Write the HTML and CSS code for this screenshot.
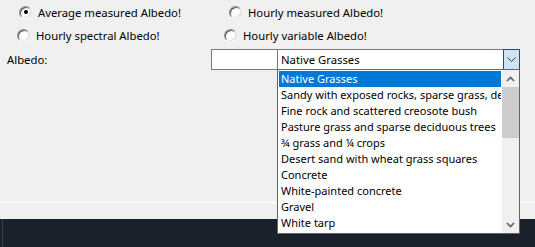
FILE: index.html
```html
<!DOCTYPE html>
<html lang="en">
<head>
    <meta charset="UTF-8">
    <title>Albedo</title>
    <link rel="stylesheet" href="styles.css">
</head>
<body>
    <div class="form">
        <div class="options">
            <div class="opt-row row-one">
                <label class="opt"><span class="radio checked"></span>Average measured Albedo!</label>
                <label class="opt"><span class="radio"></span>Hourly measured Albedo!</label>
            </div>
            <div class="opt-row row-two">
                <label class="opt"><span class="radio"></span>Hourly spectral Albedo!</label>
                <label class="opt"><span class="radio"></span>Hourly variable Albedo!</label>
            </div>
        </div>

        <div class="field-row">
            <span class="field-label">Albedo:</span>
            <div class="textbox"></div>
            <div class="combo">
                <span class="combo-value">Native Grasses</span>
                <span class="combo-button">
                    <svg width="9" height="5" viewBox="0 0 9 5"><polyline points="0.5,0.5 4.5,4.5 8.5,0.5" fill="none" stroke="#3c3c3c" stroke-width="1"/></svg>
                </span>
            </div>
        </div>

        <div class="dropdown">
            <ul class="items">
                <li class="selected">Native Grasses</li>
                <li>Sandy with exposed rocks, sparse grass, desert shrubs</li>
                <li>Fine rock and scattered creosote bush</li>
                <li>Pasture grass and sparse deciduous trees</li>
                <li>¾ grass and ¼ crops</li>
                <li>Desert sand with wheat grass squares</li>
                <li>Concrete</li>
                <li>White-painted concrete</li>
                <li>Gravel</li>
                <li>White tarp</li>
            </ul>
            <div class="scrollbar">
                <span class="scroll-arrow">
                    <svg width="9" height="6" viewBox="0 0 9 6"><polyline points="1,5 4.5,1.5 8,5" fill="none" stroke="#606060" stroke-width="1.6"/></svg>
                </span>
                <span class="scroll-thumb"></span>
                <span class="scroll-track"></span>
                <span class="scroll-arrow">
                    <svg width="9" height="6" viewBox="0 0 9 6"><polyline points="1,1 4.5,4.5 8,1" fill="none" stroke="#606060" stroke-width="1.6"/></svg>
                </span>
            </div>
        </div>
    </div>
    <div class="strip"></div>
    <div class="taskbar"><div class="taskbar-edge"></div></div>
</body>
</html>
```
FILE: styles.css
```css
body {
    margin: 0;
    width: 535px;
    height: 247px;
    overflow: hidden;
    background-color: #f0f0f0;
    font-family: "Noto Sans", "Open Sans", sans-serif;
    font-size: 11.3px;
    color: #000;
}
.form {
    position: relative;
    height: 202px;
    border-bottom: 1px solid #fff;
}
.options {
    display: flex;
    flex-direction: column;
    gap: 7px;
    padding-top: 4px;
}
.opt-row {
    display: flex;
    align-items: center;
    height: 16px;
}
.opt {
    display: flex;
    align-items: center;
    gap: 6px;
    white-space: nowrap;
}
.row-one {
    padding-left: 19px;
}
.row-one .opt:first-child {
    width: 210px;
}
.row-two {
    padding-left: 17px;
}
.row-two .opt:first-child {
    width: 207px;
}
.radio {
    position: relative;
    width: 13px;
    height: 13px;
    box-sizing: border-box;
    border-radius: 50%;
    background-color: #fff;
    border: 1px solid;
    border-color: #8a8a8a #e6e6e6 #ffffff #8a8a8a;
    box-shadow: inset 1px 1px 0 #5a5a5a, inset -1px -1px 0 #dcdcdc;
}
.radio.checked::after {
    content: "";
    position: absolute;
    left: 3.5px;
    top: 3.5px;
    width: 4px;
    height: 4px;
    border-radius: 50%;
    background-color: #000;
}
.field-row {
    display: flex;
    align-items: center;
    margin-top: 6px;
    padding-left: 7px;
    height: 21px;
}
.field-label {
    width: 204px;
}
.textbox {
    width: 67px;
    height: 21px;
    box-sizing: border-box;
    border: 1px solid #7a7a7a;
    background-color: #fff;
}
.combo {
    display: flex;
    align-items: center;
    justify-content: space-between;
    margin-left: -1px;
    width: 243px;
    height: 21px;
    box-sizing: border-box;
    border: 1px solid #7a7a7a;
    background-color: #fff;
}
.combo-value {
    padding-left: 3px;
}
.combo-button {
    display: flex;
    align-items: center;
    justify-content: center;
    width: 17px;
    height: 21px;
    margin: -1px -1px -1px 0;
    box-sizing: border-box;
    border: 1px solid #005499;
    background-color: #cce4f7;
}
.dropdown {
    position: absolute;
    left: 277px;
    top: 69px;
    z-index: 2;
    display: flex;
    width: 243px;
    height: 165px;
    box-sizing: border-box;
    border: 1px solid #646464;
    background-color: #fff;
}
.items {
    flex: 1;
    min-width: 0;
    margin: 0;
    padding: 1px;
    list-style: none;
    font-size: 11px;
}
.items li {
    height: 16px;
    line-height: 16px;
    padding-left: 2px;
    white-space: nowrap;
    overflow: hidden;
}
.items li.selected {
    background-color: #0078d7;
    color: #fff;
}
.scrollbar {
    display: flex;
    flex-direction: column;
    width: 17px;
    background-color: #f0f0f0;
}
.scroll-arrow {
    display: flex;
    align-items: center;
    justify-content: center;
    height: 17px;
}
.scroll-thumb {
    height: 51px;
    background-color: #cdcdcd;
}
.scroll-track {
    flex: 1;
}
.strip {
    height: 16px;
}
.taskbar {
    height: 28px;
    background-color: #1a212b;
    padding-left: 2px;
}
.taskbar-edge {
    width: 1px;
    height: 100%;
    background-color: #3b424b;
}
```
